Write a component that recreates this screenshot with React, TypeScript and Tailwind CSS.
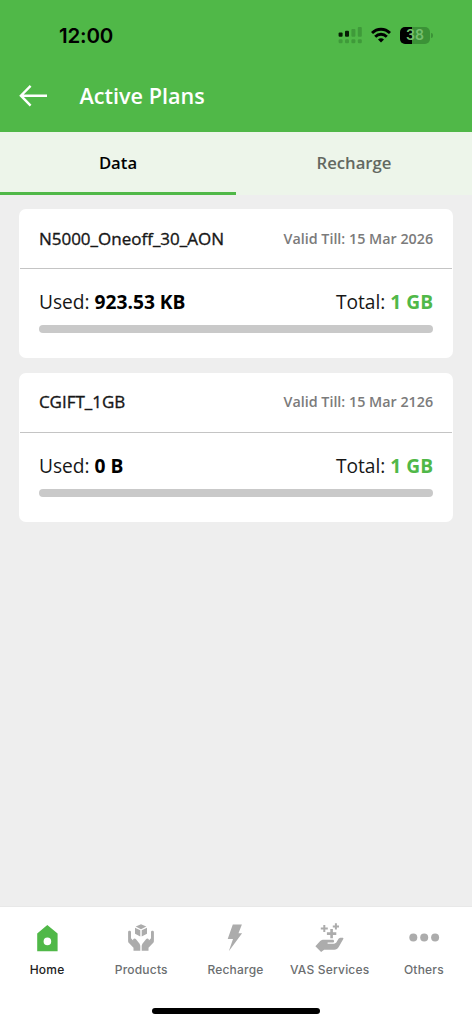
import type { ReactNode } from "react";

type Plan = {
  name: string;
  validTill: string;
  used: string;
  total: string;
};

type NavItem = {
  label: string;
  icon: ReactNode;
  active?: boolean;
};

const plans: Plan[] = [
  {
    name: "N5000_Oneoff_30_AON",
    validTill: "15 Mar 2026",
    used: "923.53 KB",
    total: "1 GB",
  },
  {
    name: "CGIFT_1GB",
    validTill: "15 Mar 2126",
    used: "0 B",
    total: "1 GB",
  },
];

function HomeIcon() {
  return (
    <svg width="32" height="32" viewBox="0 0 32 32">
      <path
        fillRule="evenodd"
        fill="#50b848"
        d="M16.3 3 26.6 11.6V29.3H6.2V11.6ZM16.4 15.6a3.8 3.8 0 1 0 0 7.6 3.8 3.8 0 1 0 0-7.6Z"
      />
    </svg>
  );
}

function ProductsIcon() {
  return (
    <svg width="32" height="32" viewBox="0 0 32 32" fill="#acacac">
      <path d="M16 2.2 21.3 4.6 16 7.2 10.7 4.6Z" />
      <path d="M10 5.7 15.3 8.3V14.5L10 11.8Z" />
      <path d="M22 5.7 16.7 8.3V14.5L22 11.8Z" />
      <path d="M3.1 10.1C3.1 8.4 6 8.4 6 10.1V16.3L8.1 18.6C7.8 16.6 9.8 15.9 11 17.2L14 20.9C14.9 22 15.3 23 15.3 24.5V28.7H8.5V25.8L4.2 21.3C3.4 20.5 3.1 19.8 3.1 18.7Z" />
      <path d="M28.9 10.1C28.9 8.4 26 8.4 26 10.1V16.3L23.9 18.6C24.2 16.6 22.2 15.9 21 17.2L18 20.9C17.1 22 16.7 23 16.7 24.5V28.7H23.5V25.8L27.8 21.3C28.6 20.5 28.9 19.8 28.9 18.7Z" />
    </svg>
  );
}

function RechargeIcon() {
  return (
    <svg width="32" height="32" viewBox="0 0 32 32">
      <path
        fill="#acacac"
        d="M13.8 2.4H22.9L19.5 11.2H23.1L9.8 29.3 14 17H8.7Z"
      />
    </svg>
  );
}

function ServicesIcon() {
  return (
    <svg width="32" height="32" viewBox="0 0 32 32">
      <path
        d="M10.3 3.1V10.1M6.8 6.6H13.8M21.9 1.3V7.5M18.8 4.4H25"
        stroke="#acacac"
        strokeWidth="2"
      />
      <path
        d="M17.6 6.9V16.3M12.9 11.6H22.3"
        stroke="#acacac"
        strokeWidth="2.6"
      />
      <path
        fill="#acacac"
        d="M1.4 24.3 6.2 19C7.2 18 8.4 17.7 10 17.7H18.6C20.6 17.7 20.6 20.6 18.6 20.6H13.6V21.7H19.8C21.3 21.7 22.2 21 22.9 19.6L24.2 17.3C25 16 26 15.7 27.2 15.7H28.4C29.3 15.7 29.7 16.4 29.3 17.1L24.7 25C23.5 26.9 22.3 27.7 20.3 27.7H10.1L7.1 29.9Z"
      />
    </svg>
  );
}

function OthersIcon() {
  return (
    <svg width="32" height="32" viewBox="0 0 32 32" fill="#acacac">
      <circle cx="5.3" cy="15.6" r="4" />
      <circle cx="16.2" cy="15.6" r="4" />
      <circle cx="27.1" cy="15.6" r="4" />
    </svg>
  );
}

const navItems: NavItem[] = [
  { label: "Home", icon: <HomeIcon />, active: true },
  { label: "Products", icon: <ProductsIcon /> },
  { label: "Recharge", icon: <RechargeIcon /> },
  { label: "VAS Services", icon: <ServicesIcon /> },
  { label: "Others", icon: <OthersIcon /> },
];

function StatusBar() {
  return (
    <div className="flex h-[70px] items-center justify-between pr-[39px] pl-[59px]">
      <span className="pt-[2px] font-['Inter',sans-serif] text-[20.5px] leading-none font-semibold tracking-[-0.2px] text-black">
        12:00
      </span>
      <div className="flex items-center">
        {/* dual SIM signal */}
        <svg width="25" height="20" viewBox="0 0 25 20">
          <g fill="#061b04">
            <rect x="0.6" y="7.4" width="4" height="4.4" rx="1" />
            <rect x="7" y="5.8" width="4" height="6" rx="1" />
          </g>
          <g fill="#3f9a3a">
            <rect x="13.4" y="4" width="4" height="7.8" rx="1" />
            <rect x="19.8" y="2" width="4" height="9.8" rx="1" />
            <rect x="0.6" y="14.2" width="4" height="4" rx="1.3" />
            <rect x="7" y="14.2" width="4" height="4" rx="1.3" />
            <rect x="13.4" y="14.2" width="4" height="4" rx="1.3" />
            <rect x="19.8" y="14.2" width="4" height="4" rx="1.3" />
          </g>
        </svg>
        <svg
          className="ml-[8px]"
          width="20"
          height="16"
          viewBox="0 0 20 16"
          fill="none"
          stroke="#000"
          strokeWidth="2.9"
        >
          <path d="M1 6C6.1.9 13.9.9 19 6" />
          <path d="M4.2 9.7C7.5 6.5 12.5 6.5 15.8 9.7" />
          <path
            d="M10 15.4 7 12.4C8.7 10.9 11.3 10.9 13 12.4Z"
            fill="#000"
            stroke="none"
          />
        </svg>
        <div className="ml-[9px] flex h-[17px] w-[30px] items-center justify-center rounded-[5px] bg-[linear-gradient(90deg,#000_39%,#3b9237_39%)]">
          <span className="font-['Inter',sans-serif] text-[14px] leading-none font-semibold text-[#74bf6e]">
            38
          </span>
        </div>
        <span className="ml-px h-[5px] w-[2px] rounded-r-full bg-[#3b9237]" />
      </div>
    </div>
  );
}

function Header() {
  return (
    <header className="h-[132px] bg-[#50b848]">
      <StatusBar />
      <div className="flex h-[52px] items-center pl-[19px] text-white">
        <svg
          width="29"
          height="24"
          viewBox="0 0 29 24"
          fill="none"
          stroke="currentColor"
          strokeWidth="2.4"
        >
          <path d="M28 11.7H2M11.6 1.8 1.9 11.7 11.6 21.6" />
        </svg>
        <h1 className="ml-[31.5px] text-[21.6px] font-semibold">
          Active Plans
        </h1>
      </div>
    </header>
  );
}

function Tabs() {
  return (
    <div className="grid h-[63px] grid-cols-2 bg-[#edf5ea] text-center text-[16.7px] leading-[20px] font-semibold">
      <button className="border-b-[3px] border-[#50b848] pt-[2px] text-black">
        Data
      </button>
      <button className="border-b-[3px] border-transparent pt-[2px] text-[#636861]">
        Recharge
      </button>
    </div>
  );
}

function PlanCard({ name, validTill, used, total }: Plan) {
  return (
    <div className="h-[149px] rounded-[7px] bg-white">
      <div className="mx-px flex h-[60px] items-center justify-between border-b border-[#c4c4c4] px-[18.5px]">
        <h2 className="text-[17px] text-[#171717] [-webkit-text-stroke:0.35px_currentColor]">
          {name}
        </h2>
        <p className="text-[14.3px] font-semibold text-[#7b7b7b]">
          Valid Till: {validTill}
        </p>
      </div>
      <div className="px-[19.5px] pt-[19px]">
        <div className="flex justify-between text-[19.2px] leading-[28px] text-[#171717]">
          <p>
            Used: <span className="font-bold text-black">{used}</span>
          </p>
          <p>
            Total: <span className="font-bold text-[#50b848]">{total}</span>
          </p>
        </div>
        <div className="mt-[9px] h-[8px] rounded-full bg-[#c9c9c9]" />
      </div>
    </div>
  );
}

function BottomNav() {
  return (
    <nav className="flex h-[118px] flex-col border-t border-[#e8e8e8] bg-white">
      <div className="grid w-[471px] grid-cols-5 pt-[15px]">
        {navItems.map((item) => (
          <button key={item.label} className="flex flex-col items-center">
            {item.icon}
            <span
              className={`mt-[8px] font-['Inter',sans-serif] text-[12px] leading-[16px] font-medium tracking-[0.2px] whitespace-nowrap ${
                item.active ? "text-[#222222]" : "text-[#6b6e70]"
              }`}
            >
              {item.label}
            </span>
          </button>
        ))}
      </div>
      <div className="mx-auto mt-[30px] h-[6px] w-[168px] rounded-full bg-black" />
    </nav>
  );
}

export default function App() {
  return (
    <div className="flex h-[1024px] w-[472px] flex-col overflow-hidden bg-[#eeeeee] font-['Open_Sans',sans-serif]">
      <Header />
      <Tabs />
      <main className="flex flex-1 flex-col gap-[14.5px] px-[19.4px] pt-[14px]">
        {plans.map((plan) => (
          <PlanCard key={plan.name} {...plan} />
        ))}
      </main>
      <BottomNav />
    </div>
  );
}
